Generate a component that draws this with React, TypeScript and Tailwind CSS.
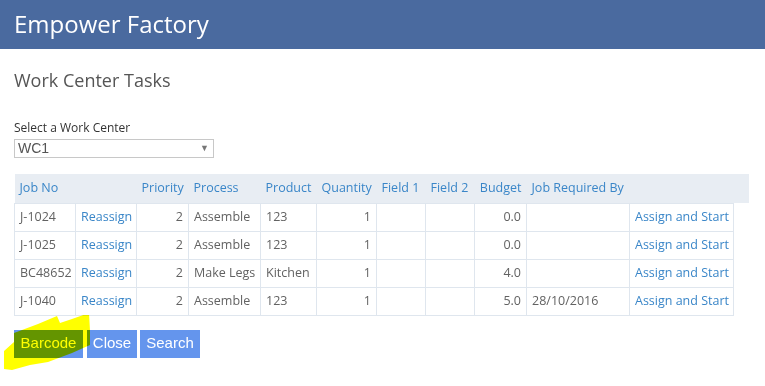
import React from 'react'

type Row = {
  job: string
  priority: number
  process: string
  product: string
  qty: number
  budget: string
  requiredBy: string
}

const rows: Row[] = [
  { job: 'J-1024', priority: 2, process: 'Assemble', product: '123', qty: 1, budget: '0.0', requiredBy: '' },
  { job: 'J-1025', priority: 2, process: 'Assemble', product: '123', qty: 1, budget: '0.0', requiredBy: '' },
  { job: 'BC48652', priority: 2, process: 'Make Legs', product: 'Kitchen', qty: 1, budget: '4.0', requiredBy: '' },
  { job: 'J-1040', priority: 2, process: 'Assemble', product: '123', qty: 1, budget: '5.0', requiredBy: '28/10/2016' },
]

const cols = [61, 61, 52, 72, 56, 60, 49, 49, 52, 103, 104, 15]
const heads = ['Job No', '', 'Priority', 'Process', 'Product', 'Quantity', 'Field 1', 'Field 2', 'Budget', 'Job Required By', '', '']

const td = 'border border-[#dfe6ee] px-[5px] h-[28px] whitespace-nowrap'

const App = () => {
  return (
    <div className="w-[765px] h-[386px] bg-white font-['Open_Sans',sans-serif] text-[12.5px] text-[#626262] overflow-hidden">
      <div className="h-[49px] bg-[#4a6a9f] flex items-center pl-[14px]">
        <h1 className="text-white text-[24px] leading-none -mt-[1px]">Empower Factory</h1>
      </div>
      <div className="px-[14px]">
        <h2 className="text-[18px] text-[#555] mt-[19px] leading-[24px]">Work Center Tasks</h2>
        <div className="mt-[28px] text-[12px] text-[#333] leading-[16px]">Select a Work Center</div>
        <div className="mt-[3px] w-[200px] h-[19px] border border-[#c8c8c8] flex items-center justify-between px-[3px] font-['Liberation_Sans',sans-serif] text-[14px] text-[#555]">
          <span>WC1</span>
          <span className="text-[9px] text-[#777] mr-[1px]">▼</span>
        </div>
        <table className="mt-[16px] border-collapse table-fixed w-[734px]">
          <colgroup>
            {cols.map((w, i) => (
              <col key={i} style={{ width: w }} />
            ))}
          </colgroup>
          <thead>
            <tr className="bg-[#e8edf3] h-[29px]">
              {heads.map((h, i) => (
                <th
                  key={i}
                  className={`font-normal text-left px-[5px] text-[#3a86c8] whitespace-nowrap ${
                    i === 5 || i === 8 ? 'text-right' : ''
                  }`}
                >
                  {h}
                </th>
              ))}
            </tr>
          </thead>
          <tbody>
            {rows.map((r) => (
              <tr key={r.job}>
                <td className={td}>{r.job}</td>
                <td className={`${td} text-[#3a86c8]`}>Reassign</td>
                <td className={`${td} text-right`}>{r.priority}</td>
                <td className={td}>{r.process}</td>
                <td className={td}>{r.product}</td>
                <td className={`${td} text-right`}>{r.qty}</td>
                <td className={td}></td>
                <td className={td}></td>
                <td className={`${td} text-right`}>{r.budget}</td>
                <td className={td}>{r.requiredBy}</td>
                <td className={`${td} text-right text-[#3a86c8]`}>Assign and Start</td>
                <td></td>
              </tr>
            ))}
          </tbody>
        </table>
        <div className="relative mt-[14px] flex gap-[4px] font-['Liberation_Sans',sans-serif] text-[15px]">
          <button className="h-[28px] w-[69px] bg-[#6495ed] text-white">Barcode</button>
          <button className="h-[28px] w-[50px] bg-[#6495ed] text-white">Close</button>
          <button className="h-[28px] w-[60px] bg-[#6495ed] text-white -ml-[1px]">Search</button>
          <svg
            className="absolute left-[-14px] top-[-15px] mix-blend-multiply pointer-events-none"
            width="100"
            height="60"
            viewBox="0 314 100 60"
          >
            <polygon
              fill="#ffff00"
              points="4,350 14,341 14,332 38,323 57,315 60,322 72,318 89,312 90,330 90,344 72,352 48,361 30,364 12,369 4,368"
            />
          </svg>
        </div>
      </div>
    </div>
  )
}

export default App
